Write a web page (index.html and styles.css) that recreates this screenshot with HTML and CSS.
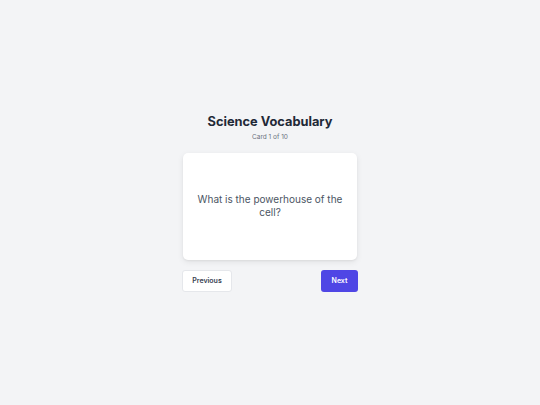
FILE: index.html
```html
<!DOCTYPE html>
<html lang="en">
<head>
<meta charset="utf-8">
<title>Science Vocabulary</title>
<link rel="stylesheet" href="styles.css">
</head>
<body>
<main class="app">
  <header class="head">
    <h1 class="title">Science Vocabulary</h1>
    <p class="count">Card 1 of 10</p>
  </header>
  <section class="card">
    <p class="question">What is the powerhouse of the cell?</p>
  </section>
  <nav class="controls">
    <button class="btn btn-prev">Previous</button>
    <button class="btn btn-next">Next</button>
  </nav>
</main>
</body>
</html>
```
FILE: styles.css
```css
* { box-sizing: border-box; }
html, body { margin: 0; padding: 0; }
body {
  width: 540px;
  height: 405px;
  background: #f3f4f6;
  font-family: Inter, "Liberation Sans", sans-serif;
  display: flex;
  align-items: center;
  justify-content: center;
}
.app {
  width: 176px;
  display: flex;
  flex-direction: column;
}
.head {
  text-align: center;
  margin-bottom: 11px;
}
.title {
  margin: 0;
  font-size: 12.8px;
  line-height: 16px;
  font-weight: 700;
  color: #1f2937;
}
.count {
  margin: 3px 0 0;
  font-size: 6.5px;
  line-height: 9px;
  color: #6b7280;
}
.card {
  background: #fff;
  border-radius: 5px;
  box-shadow: 0 2px 6px rgba(0,0,0,0.08), 0 1px 2px rgba(0,0,0,0.05);
  height: 107px;
  margin: 0 1px;
  display: flex;
  align-items: center;
  justify-content: center;
  padding: 0 10px;
}
.question {
  margin: 0;
  text-align: center;
  font-size: 10px;
  line-height: 13px;
  color: #4b5563;
}
.controls {
  margin-top: 10px;
  display: flex;
  justify-content: space-between;
}
.btn {
  font-family: inherit;
  font-size: 7px;
  font-weight: 600;
  height: 22px;
  border-radius: 3px;
  padding: 0;
  cursor: pointer;
}
.btn-prev {
  background: #fff;
  color: #374151;
  border: 1px solid #e5e7eb;
  width: 50px;
}
.btn-next {
  background: #4f46e5;
  color: #fff;
  border: 0;
  width: 37px;
}
```
